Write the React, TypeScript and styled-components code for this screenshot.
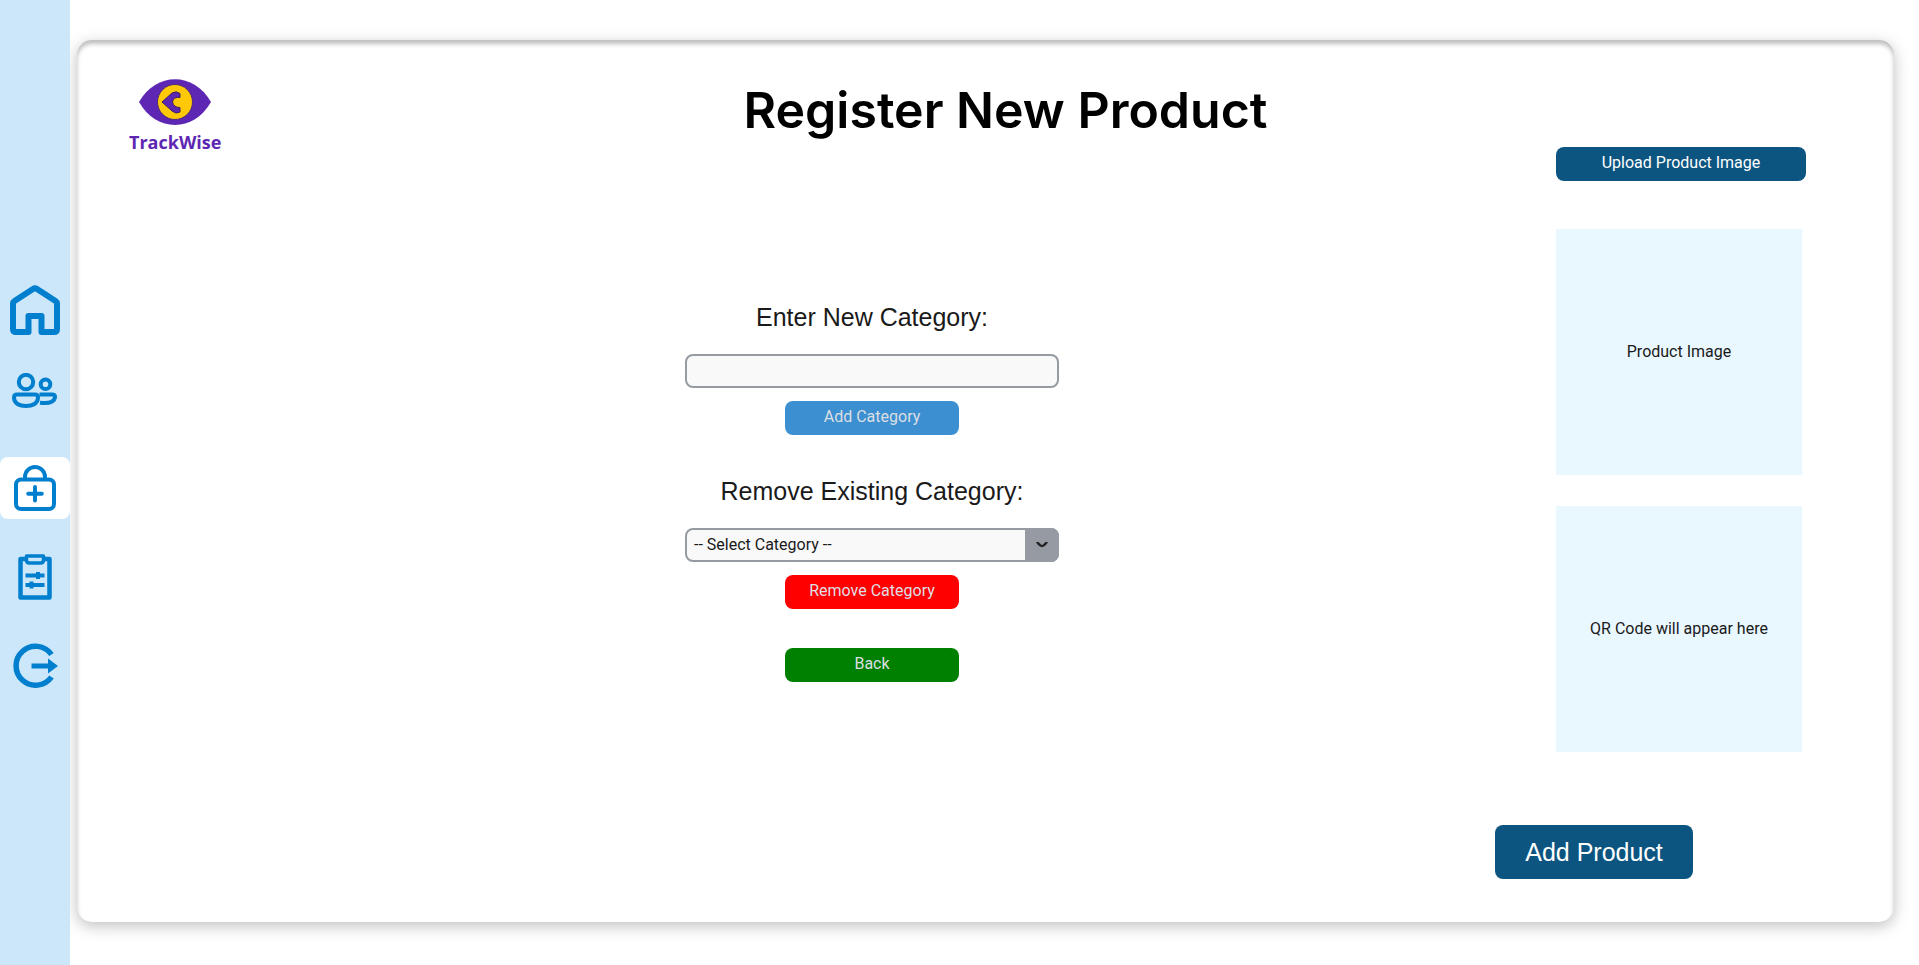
import React from "react";
import styled, { createGlobalStyle } from "styled-components";

const GlobalStyle = createGlobalStyle`
  *, *::before, *::after { box-sizing: border-box; }
  body {
    margin: 0;
    background: #fff;
    color: #1a1a1a;
    font-family: Roboto, sans-serif;
    font-size: 16px;
    line-height: 20px;
  }
`;

const Page = styled.div`
  display: flex;
  min-height: 100vh;
`;

const Sidebar = styled.nav`
  position: relative;
  z-index: 1;
  display: flex;
  flex: 0 0 70px;
  flex-direction: column;
  align-items: stretch;
  justify-content: center;
  gap: 27px;
  padding-top: 10px;
  background: #cce7fa;
`;

const NavLink = styled.a<{ $active?: boolean }>`
  display: flex;
  align-items: center;
  justify-content: center;
  height: 62px;
  border-radius: 8px;
  background: ${(p) => (p.$active ? "#fff" : "transparent")};
  color: #007fce;

  svg { display: block; fill: none; stroke: currentColor; }
`;

const Card = styled.main`
  display: flex;
  flex: 1;
  flex-direction: column;
  margin: 40px 25px 43px 7px;
  border-radius: 15px;
  background: #fff;
  box-shadow: 0 4px 15px rgba(0, 0, 0, 0.25), inset 0 4px 4px rgba(0, 0, 0, 0.25);
`;

const Header = styled.header`
  display: grid;
  grid-template-columns: 1fr auto 1fr;
  align-items: start;
  height: 107px;
  padding: 39px 12px 0 52px;
`;

const Logo = styled.a`
  display: flex;
  flex-direction: column;
  align-items: center;
  justify-self: start;
  color: #5e27b3;
  font-family: "Open Sans", sans-serif;
  font-size: 18px;
  font-weight: 700;
  line-height: 34px;
  text-decoration: none;

  svg { display: block; }
`;

const Title = styled.h1`
  margin: 0;
  color: #000;
  font-family: Inter, sans-serif;
  font-size: 50px;
  font-weight: 600;
  line-height: 62px;
`;

const Content = styled.div`
  display: flex;
  flex: 1;
`;

const Form = styled.form`
  display: flex;
  flex: 1;
  flex-direction: column;
  align-items: center;
  gap: 39px;
  padding: 153px 0 39px 172px;
`;

const FieldGroup = styled.div`
  display: flex;
  flex-direction: column;
  align-items: center;
  gap: 13px;
`;

const Label = styled.label`
  margin-bottom: 6px;
  font-family: "Liberation Sans", Arial, sans-serif;
  font-size: 25px;
  line-height: 35px;
`;

const TextInput = styled.input`
  width: 374px;
  height: 34px;
  padding: 0 8px;
  border: 2px solid #969ba3;
  border-radius: 8px;
  background: #f9f9f9;
  font: inherit;
`;

const SelectBox = styled.div`
  position: relative;
  width: 374px;
  height: 34px;

  select {
    width: 100%;
    height: 34px;
    padding: 0 40px 0 7px;
    border: 2px solid #969ba3;
    border-radius: 8px;
    appearance: none;
    background: #f9f9f9;
    color: inherit;
    font: inherit;
  }

  span {
    position: absolute;
    top: 0;
    right: 0;
    display: flex;
    align-items: center;
    justify-content: center;
    width: 34px;
    height: 34px;
    border-radius: 0 8px 8px 0;
    background: #969ba3;
    pointer-events: none;
  }
`;

const Button = styled.button<{ $color: string; $width?: number; $soft?: boolean }>`
  width: ${(p) => p.$width ?? 174}px;
  height: 34px;
  padding: 0 0 2px;
  border: 0;
  border-radius: 8px;
  background: ${(p) => p.$color};
  color: ${(p) => (p.$soft ? "#dcdfe3" : "#fff")};
  font: inherit;
  cursor: pointer;
`;

const Aside = styled.aside`
  flex: 0 0 399px;
`;

const PreviewStack = styled.div`
  display: flex;
  flex-direction: column;
  gap: 31px;
  padding-left: 61px;

  button { margin-bottom: 17px; }
`;

const Preview = styled.div`
  display: flex;
  align-items: center;
  justify-content: center;
  width: 246px;
  height: 246px;
  background: #e9f7ff;
`;

const SubmitButton = styled.button`
  width: 198px;
  height: 54px;
  margin-top: 73px;
  border: 0;
  border-radius: 8px;
  background: #0c5581;
  color: #fff;
  font-family: "Liberation Sans", Arial, sans-serif;
  font-size: 25px;
  cursor: pointer;
`;

const HomeIcon = () => (
  <svg width="50" height="50" viewBox="0 0 50 50" strokeWidth="6" strokeLinejoin="round">
    <path d="M3 18.500 Q3 17 4.500 16 L23 4 Q25 2.700 27 4 L45.500 16 Q47 17 47 18.500 V44 Q47 47 44 47 H31.500 V31 H18.500 V47 H6 Q3 47 3 44 Z" />
  </svg>
);

const UsersIcon = () => (
  <svg width="46" height="52" viewBox="0 0 46 52" strokeWidth="4">
    <circle cx="14" cy="9" r="7.200" />
    <circle cx="33.500" cy="11.300" r="4.800" />
    <path d="M5 21.500 H23 Q26 21.500 26 24.500 C26 31 20 33 14 33 S2 31 2 24.500 Q2 21.500 5 21.500 Z" />
    <path d="M27.500 21.500 H40 Q43.500 21.500 43 24.500 C42 29.500 35 30.500 28 29.700" />
  </svg>
);

const AddProductIcon = () => (
  <svg width="42" height="46" viewBox="0 0 42 46" strokeWidth="4" strokeLinejoin="round">
    <rect x="2" y="14.500" width="38" height="29.500" rx="5" />
    <path d="M11 14.500 V12 a10 10 0 0 1 20 0 V14.500" />
    <path d="M21 22 V35.500 M14.200 28.700 H27.800" strokeLinecap="round" />
  </svg>
);

const ReportIcon = () => (
  <svg width="34" height="46" viewBox="0 0 34 46" strokeWidth="4.500" strokeLinejoin="round">
    <path d="M8 5 H2.500 V43.500 H31.500 V5 H26" />
    <path d="M8.500 2 H25.500 V6 Q25.500 9 22.500 9 H11.500 Q8.500 9 8.500 6 Z" strokeWidth="3.500" />
    <path d="M7.500 21.500 H26.500 M7.500 31 H26.500" strokeWidth="4" />
    <path d="M20 18 V25 M13.500 27.500 V34.500" strokeWidth="4" />
  </svg>
);

const LogoutIcon = () => (
  <svg width="46" height="46" viewBox="0 0 46 46" strokeWidth="5.500">
    <path d="M39.500 11.500 A19.500 19.500 0 1 0 39.500 34" />
    <path d="M19.500 23 H38" strokeWidth="5" />
    <path d="M36 15.500 L46 23 L36 30.500 Z" fill="currentColor" stroke="none" />
  </svg>
);

const EyeLogo = () => (
  <svg width="72" height="46" viewBox="0 0 72 46">
    <path d="M0 23 C17 -7.500 55 -7.500 72 23 C55 53.500 17 53.500 0 23 Z" fill="#5e27b3" />
    <circle cx="36" cy="23" r="17.500" fill="#ffc907" stroke="#4b2a7a" strokeWidth="1" />
    <path d="M23 23 L33 14 Q37.500 11.500 41 14.500 V18.500 Q34.500 17.500 33.500 23 Q34.500 28.500 41 28.500 V33 Q37 35.500 33 32 Z" fill="#5e27b3" stroke="#3c2060" strokeWidth="1" />
  </svg>
);

const ChevronIcon = () => (
  <svg width="12" height="6" viewBox="0 0 12 6">
    <path d="M0 0 H2.500 L6 3.200 L9.500 0 H12 Q10.500 4 6 5.200 Q1.500 4 0 0 Z" fill="#222" />
  </svg>
);

const navItems = [
  { label: "Home", icon: <HomeIcon /> },
  { label: "Users", icon: <UsersIcon /> },
  { label: "Register product", icon: <AddProductIcon />, active: true },
  { label: "Reports", icon: <ReportIcon /> },
  { label: "Log out", icon: <LogoutIcon /> },
];

export default function App() {
  return (
    <Page>
      <GlobalStyle />
      <Sidebar aria-label="Main">
        {navItems.map((item) => (
          <NavLink key={item.label} href="#" aria-label={item.label} $active={item.active}>
            {item.icon}
          </NavLink>
        ))}
      </Sidebar>
      <Card>
        <Header>
          <Logo href="#">
            <EyeLogo />
            TrackWise
          </Logo>
          <Title>Register New Product</Title>
        </Header>
        <Content>
          <Form onSubmit={(e) => e.preventDefault()}>
            <FieldGroup>
              <Label htmlFor="new-category">Enter New Category:</Label>
              <TextInput id="new-category" type="text" />
              <Button type="button" $color="#3c8fd1" $soft>Add Category</Button>
            </FieldGroup>
            <FieldGroup>
              <Label htmlFor="old-category">Remove Existing Category:</Label>
              <SelectBox>
                <select id="old-category">
                  <option>-- Select Category --</option>
                </select>
                <span>
                  <ChevronIcon />
                </span>
              </SelectBox>
              <Button type="button" $color="#ff0000" $soft>Remove Category</Button>
            </FieldGroup>
            <Button type="button" $color="#008000" $soft>Back</Button>
          </Form>
          <Aside>
            <PreviewStack>
              <Button type="button" $color="#0c5581" $width={250}>Upload Product Image</Button>
              <Preview>Product Image</Preview>
              <Preview>QR Code will appear here</Preview>
            </PreviewStack>
            <SubmitButton type="button">Add Product</SubmitButton>
          </Aside>
        </Content>
      </Card>
    </Page>
  );
}
